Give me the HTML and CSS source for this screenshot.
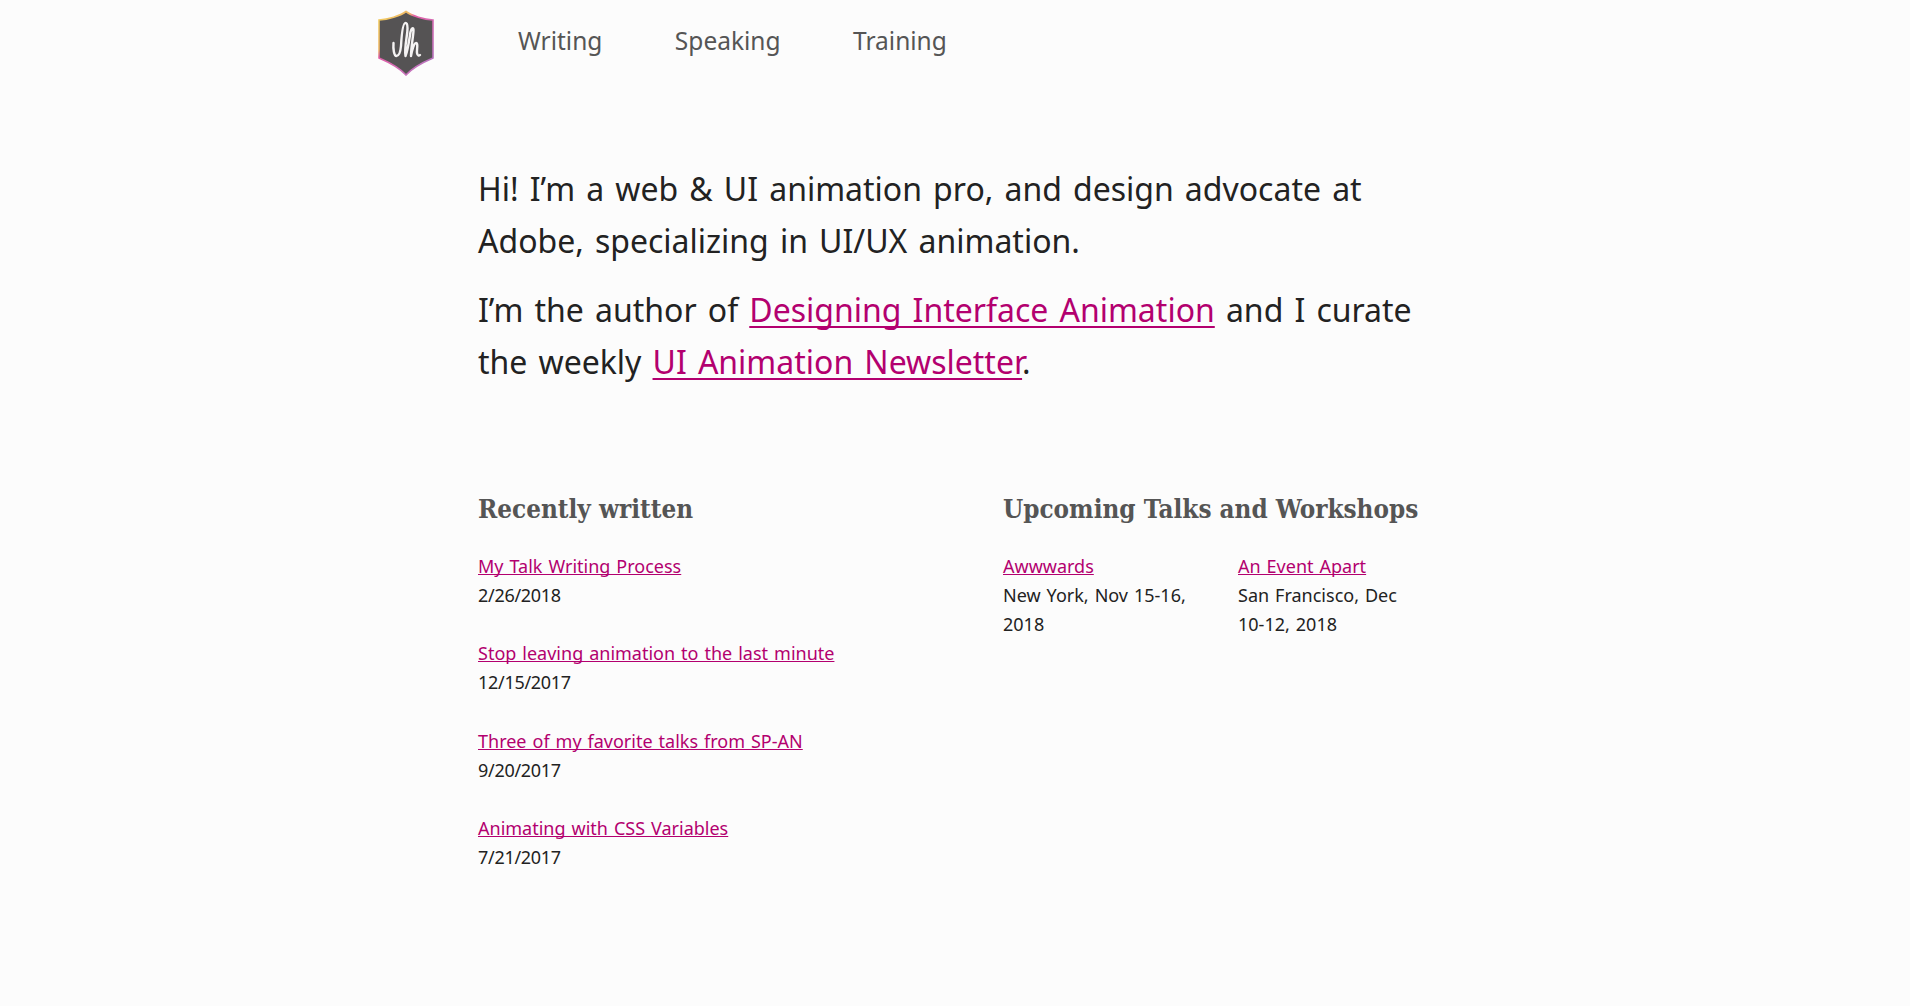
FILE: index.html
```html
<!DOCTYPE html>
<html lang="en">
<head>
<meta charset="utf-8">
<title>Val Head</title>
<link rel="stylesheet" href="styles.css">
</head>
<body>
<header class="site-header">
  <a class="logo" href="#" aria-label="vlh">
    <svg viewBox="0 0 58 68" width="58" height="68">
      <defs>
        <linearGradient id="edge" x1="0" y1="0" x2="1" y2="1">
          <stop offset="0" stop-color="#f2d060"/>
          <stop offset="0.3" stop-color="#f0b868"/>
          <stop offset="0.36" stop-color="#e25fa8"/>
          <stop offset="0.7" stop-color="#cc70b8"/>
          <stop offset="1" stop-color="#a877c4"/>
        </linearGradient>
      </defs>
      <path class="shield" d="M28 1.5 C22 6 10 9.5 1 10 L1 48 C8 51 20 56 28 65 C36 56 48 51 55 48 L55 10 C46 9.5 34 6 28 1.5 Z" stroke="url(#edge)"/>
      <path class="script" d="M15.5 33 C15 39 16 46 18.5 46 C21 46 22.5 41 23 36 C23.5 27 24.5 13 27.5 13 C30.5 13 29.5 22 28.5 28 C27.5 35 26.5 42 27.5 46 C30 40 31.5 28 32.5 22 C33.5 18 35.5 17 35.5 20 C35.5 26 33 36 33 46 C34 40 36 33 38 33 C40.5 33 38.5 40 39 43 C39.5 46 41 46 42 45"/>
    </svg>
  </a>
  <nav class="nav">
    <a href="#">Writing</a>
    <a href="#">Speaking</a>
    <a href="#">Training</a>
  </nav>
</header>
<main class="content">
  <section class="intro">
    <p>Hi! I’m a web &amp; UI animation pro, and design advocate at Adobe, specializing in UI/UX animation.</p>
    <p>I’m the author of <a href="#">Designing Interface Animation</a> and I curate the weekly <a href="#">UI Animation Newsletter</a>.</p>
  </section>
  <div class="columns">
    <section class="written">
      <h2>Recently written</h2>
      <ul class="posts">
        <li><a href="#">My Talk Writing Process</a><br><span class="date">2/26/2018</span></li>
        <li><a href="#">Stop leaving animation to the last minute</a><br><span class="date">12/15/2017</span></li>
        <li><a href="#">Three of my favorite talks from SP-AN</a><br><span class="date">9/20/2017</span></li>
        <li><a href="#">Animating with CSS Variables</a><br><span class="date">7/21/2017</span></li>
      </ul>
    </section>
    <section class="talks">
      <h2>Upcoming Talks and Workshops</h2>
      <div class="events">
        <div><a href="#">Awwwards</a><br>New York, Nov 15-16, 2018</div>
        <div><a href="#">An Event Apart</a><br>San Francisco, Dec 10-12, 2018</div>
      </div>
    </section>
  </div>
</main>
</body>
</html>
```
FILE: styles.css
```css
* { box-sizing: border-box; }
html, body { margin: 0; }
body {
  background: #fcfcfc;
  color: #222;
  font-family: "Noto Sans", "Open Sans", sans-serif;
  font-size: 18px;
  word-spacing: 1.3px;
  line-height: 29.1px;
}
a { color: #b3006f; text-decoration-skip-ink: none; }
.site-header {
  width: 1154px;
  margin: 0 auto;
  padding-top: 10px;
  display: flex;
  align-items: flex-start;
}
.logo { display: block; height: 68px; }
.logo svg { display: block; }
.shield { fill: #555354; stroke-width: 1.6; }
.script { fill: none; stroke: #f4f2f2; stroke-width: 2.4; stroke-linecap: round; stroke-linejoin: round; }
.nav {
  display: flex;
  gap: 72.5px;
  margin-left: 82px;
  padding-top: 11px;
  font-size: 24.5px;
  word-spacing: 0;
  line-height: 40px;
}
.nav a { color: #555; text-decoration: none; }
.content {
  width: 954px;
  margin: 0 auto;
  padding-top: 85px;
}
.intro { font-size: 32px; word-spacing: 2.8px; line-height: 52px; }
.intro p { margin: 0 0 17px; }
.intro a { text-underline-offset: 4px; text-decoration-thickness: 2px; }
.columns {
  display: flex;
  margin-top: 104px;
}
.written { width: 525px; flex: none; }
.talks { flex: 1; }
h2 {
  margin: 0 0 26px;
  color: #555;
  font-family: "DejaVu Serif Condensed", "DejaVu Serif", serif;
  font-size: 25.8px;
  word-spacing: 0;
  line-height: 34px;
  font-weight: 700;
  white-space: nowrap;
}
.posts { list-style: none; margin: 0; padding: 0; }
.posts li { margin-bottom: 29.1px; }
.date { letter-spacing: -0.3px; }
.events { display: flex; gap: 50px; }
.events > div { width: 185px; }
```
